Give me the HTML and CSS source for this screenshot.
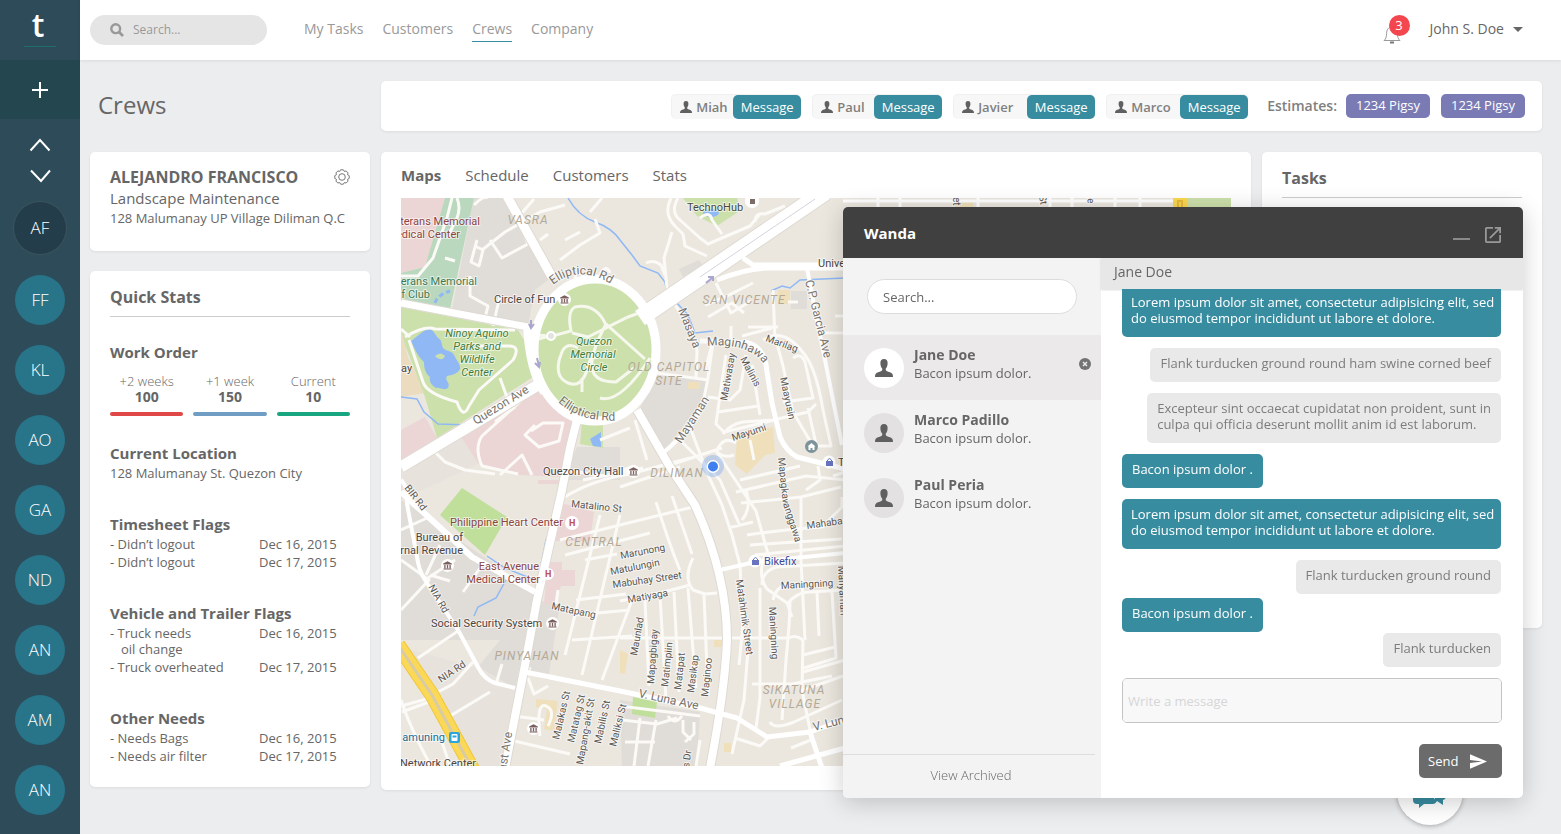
FILE: index.html
```html
<!DOCTYPE html>
<html lang="en">
<head>
<meta charset="utf-8">
<meta name="viewport" content="width=device-width, initial-scale=1">
<title>Crews</title>
<link rel="stylesheet" href="styles.css">
</head>
<body class="app">
<svg class="defs" width="0" height="0" aria-hidden="true">
  <symbol id="person" viewBox="0 0 16 16"><path d="M8 0C5.700 0 4.600 1.600 4.800 3.900c0 2 .8 3.600 1.600 4.600.2 1 0 1.700-.7 2.100C4 11.400 1.200 11.900.4 13.500.1 14.200 0 15.200 0 16h16c0-.8-.1-1.800-.4-2.500-.8-1.600-3.600-2.100-5.300-2.900-.7-.4-.9-1.100-.7-2.100.8-1 1.600-2.600 1.600-4.600C11.400 1.600 10.300 0 8 0z"/></symbol>
  <symbol id="bank" viewBox="0 0 12 12"><circle cx="6" cy="6" r="6" fill="#fff"/><path d="M6 2L2 4.200v.9h8v-.9zM3 5.500h1.200V8.500H3zM5.400 5.500h1.200V8.500H5.400zM7.800 5.500H9V8.500H7.800zM2.300 8.800h7.400v1H2.300z" fill="#7a5f5c"/></symbol>
</svg>

<aside class="sidebar">
  <a class="logo" href="#">t</a>
  <button class="sidebar-add" aria-label="Add"><svg width="16" height="16" viewBox="0 0 16 16"><path d="M8 0v16M0 8h16" stroke="#fff" stroke-width="2"/></svg></button>
  <div class="sidebar-arrows">
    <button class="arrow" aria-label="Previous"><svg width="22" height="14" viewBox="0 0 22 14"><path d="M1.500 12.500L11 2l9.500 10.500" fill="none" stroke="#fff" stroke-width="2"/></svg></button>
    <button class="arrow" aria-label="Next"><svg width="22" height="14" viewBox="0 0 22 14"><path d="M2 1.500L12 12l9-10.500" fill="none" stroke="#fff" stroke-width="2"/></svg></button>
  </div>
  <nav class="crew-list" aria-label="Crews">
    <a class="bubble bubble-active" href="#">AF</a>
    <a class="bubble" href="#">FF</a>
    <a class="bubble" href="#">KL</a>
    <a class="bubble" href="#">AO</a>
    <a class="bubble" href="#">GA</a>
    <a class="bubble" href="#">ND</a>
    <a class="bubble" href="#">AN</a>
    <a class="bubble" href="#">AM</a>
    <a class="bubble" href="#">AN</a>
  </nav>
</aside>

<div class="page">
  <header class="topbar">
    <label class="top-search">
      <svg width="14" height="14" viewBox="0 0 14 14"><circle cx="5.700" cy="5.700" r="4.400" fill="none" stroke="#999" stroke-width="2.400"/><path d="M9 9l4 4" stroke="#999" stroke-width="2.600"/></svg>
      <input type="search" placeholder="Search..." aria-label="Search">
    </label>
    <nav class="main-nav">
      <a href="#">My Tasks</a>
      <a href="#">Customers</a>
      <a class="current" href="#">Crews</a>
      <a href="#">Company</a>
    </nav>
    <div class="account">
      <button class="bell" aria-label="Notifications">
        <svg width="18" height="20" viewBox="0 0 18 20"><path d="M1 16.500c2-1.500 2.500-4 2.600-7C3.700 5.500 5.500 3 9 3s5.300 2.500 5.400 6.500c.1 3 .6 5.500 2.600 7z" fill="none" stroke="#999"/><path d="M7 18.500h4" stroke="#777" stroke-width="2"/></svg>
        <span class="badge">3</span>
      </button>
      <button class="user">John S. Doe <svg width="10" height="5" viewBox="0 0 10 5"><path d="M0 0h10L5 5z" fill="#666"/></svg></button>
    </div>
  </header>

  <main class="content">
    <h1 class="page-title">Crews</h1>
    <section class="crewbar" aria-label="Crew members">
      <div class="crew"><span class="crew-name"><svg class="crew-icon"><use href="#person"/></svg>Miah</span><button class="btn-message">Message</button></div>
      <div class="crew"><span class="crew-name"><svg class="crew-icon"><use href="#person"/></svg>Paul</span><button class="btn-message">Message</button></div>
      <div class="crew"><span class="crew-name crew-name-long"><svg class="crew-icon"><use href="#person"/></svg>Javier</span><button class="btn-message">Message</button></div>
      <div class="crew"><span class="crew-name crew-name-long"><svg class="crew-icon"><use href="#person"/></svg>Marco</span><button class="btn-message">Message</button></div>
      <div class="estimates"><span>Estimates:</span><a class="pill" href="#">1234 Pigsy</a><a class="pill" href="#">1234 Pigsy</a></div>
    </section>

    <div class="left-col">
      <section class="card profile">
        <div class="profile-head">
          <h2>ALEJANDRO FRANCISCO</h2>
          <button class="gear" aria-label="Settings"><svg width="16" height="16" viewBox="0 0 16 16" fill="none" stroke="#777"><path d="M15.200 6.600V9.400Q12.400 10 14.050 12.100L12.100 14.050Q10 12.400 9.400 15.200H6.600Q6 12.400 3.900 14.050L1.950 12.100Q3.600 10 .8 9.400V6.600Q3.600 6 1.950 3.900L3.900 1.950Q6 3.600 6.600 .8H9.400Q10 3.600 12.100 1.950L14.050 3.900Q12.400 6 15.200 6.600Z"/><circle cx="8" cy="8" r="3.300"/></svg></button>
        </div>
        <p class="role">Landscape Maintenance</p>
        <p class="address">128 Malumanay UP Village Diliman Q.C</p>
      </section>

      <section class="card stats">
        <h2 class="card-title">Quick Stats</h2>
        <h3 class="stat-title">Work Order</h3>
        <div class="orders">
          <div class="order order-red">+2 weeks<strong>100</strong></div>
          <div class="order order-blue">+1 week<strong>150</strong></div>
          <div class="order order-green">Current<strong>10</strong></div>
        </div>
        <div class="stat-block">
          <h3 class="stat-title">Current Location</h3>
          <p class="stat-text">128 Malumanay St. Quezon City</p>
        </div>
        <div class="stat-block">
          <h3 class="stat-title">Timesheet Flags</h3>
          <ul class="flags">
            <li><span>- Didn’t logout</span><time>Dec 16, 2015</time></li>
            <li><span>- Didn’t logout</span><time>Dec 17, 2015</time></li>
          </ul>
        </div>
        <div class="stat-block">
          <h3 class="stat-title">Vehicle and Trailer Flags</h3>
          <ul class="flags">
            <li><span class="flag-wrap">- Truck needs<br>oil change</span><time>Dec 16, 2015</time></li>
            <li><span>- Truck overheated</span><time>Dec 17, 2015</time></li>
          </ul>
        </div>
        <div class="stat-block">
          <h3 class="stat-title">Other Needs</h3>
          <ul class="flags">
            <li><span>- Needs Bags</span><time>Dec 16, 2015</time></li>
            <li><span>- Needs air filter</span><time>Dec 17, 2015</time></li>
          </ul>
        </div>
      </section>
    </div>

    <section class="card map-card">
      <nav class="tabs">
        <a class="tab-on" href="#">Maps</a>
        <a href="#">Schedule</a>
        <a href="#">Customers</a>
        <a href="#">Stats</a>
      </nav>
      <svg class="map" viewBox="401 198 830 568" preserveAspectRatio="xMinYMin slice" role="img" aria-label="Map of Quezon City">
        <rect x="401" y="198" width="830" height="568" fill="#ebe7df"/>
        <!-- built-up blocks -->
        <g fill="#e0dcd7">
          <path d="M474 198H505L552 277 535 290 528 325 452 309z"/>
          <path d="M401 500L430 520 535 592 515 688 478 667 500 640 400 640z"/>
          <path d="M401 647L478 668 515 690 508 766 470 766z" opacity=".35"/>
          <path d="M657 375L708 380 703 400 665 450 640 408z"/>
          <path d="M577 447H620V480H563z"/>
          <path d="M620 700L700 712 697 766H622z"/>
          <path d="M401 460L478 420 480 463 401 500z" opacity=".4"/>
          <path d="M535 600L560 604 548 680 525 672z"/>
          <path d="M679 269l20-9 4 6-20 11z"/><path d="M791 291h16v18h-16z"/>
        </g>
        <!-- hospitals -->
        <g fill="#ecd5d5">
          <path d="M401 198H445L425 267 401 273z"/>
          <path d="M401 430L425 417 437 438 401 460z"/>
          <path d="M462 438L538 388 565 407 572 420 562 477 520 475 478 463z"/>
          <path d="M561 503L594 512 590 541 556 541z"/><path d="M548 562h14v8h13v16h-14l-6 18h-11z"/>
          <path d="M538 480h27v4h-27z"/>
        </g>
        <!-- schools -->
        <g fill="#efe0bb">
          <path d="M737 437L773 427 775 453 765 455 747 474 735 465z"/>
          <path d="M401 330L408 357 425 393 401 397z" fill="#ecdcbf"/>
          <path d="M778 290h12v14h-12z"/><path d="M688 382h12v7h-12zM714 640h8v7h-8zM724 743h7v9h-7zM536 699l22 2-4 30-10-2 3-20-11-2z"/>
          <path d="M620 650l8 4-3 20-5-1z"/><path d="M955 200h18v7h-18z"/>
        </g>
        <!-- parks -->
        <g fill="#cce0ab">
          <path d="M401 307L518 330 530 350 533 377 437 438 425 397 405 345 401 330z"/>
          <ellipse cx="595" cy="350" rx="60" ry="70"/>
          <path d="M582 420L603 414V448L580 444z"/>
          <path d="M462 488L507 517 485 555 440 515z" fill="#bfdf9b"/>
          <path d="M633 697L657 702 655 718 632 714z" fill="#bfdf9b"/>
          <path d="M683 198H737L741 210 717 226 697 216z"/>
          <path d="M1187 198h44v10h-44z"/>
          <path d="M445 198H474L450 309 401 300 401 273 425 267z" fill="#b9d8bd"/>
        </g>
        <!-- water -->
        <g fill="#8fb8f5">
          <path d="M411 341C418 336 422 331 429 329c6 2 6 6 9 9 5 2 3 9 6 11 5 3 9 2 11 8 2 4 6 8 5 12-3 5-8 6-13 7-3 5 4 6 1 12-5 3-8-1-12 0-5-3-7-7-6-11-5-4-6-10-6-15-5-4-9-12-13-21z"/>
          <ellipse cx="711" cy="213" rx="8" ry="4"/><path d="M590 439l11-7v15l-8-1z"/>
        </g>
        <path d="M435 356q6-5 10 0-2 5-8 2z" fill="#cce0ab"/>
        <g fill="none" stroke="#8fb8f5" stroke-width="1.500">
          <path d="M568 198Q578 216 595 222T620 240L632 255 640 266 658 273 665 282 668 298"/>
          <path d="M676 302L688 315 695 333 713 331"/><path d="M771 291L782 286 790 288 800 280 845 278"/>
          <path d="M401 397L417 399 424 412 438 424 470 425"/><path d="M506 580L496 598 478 607 474 616M487 556L505 568 535 580M536 590L542 560 546 540 550 532"/>
          <path d="M435 303q2-8 15-12" stroke-dasharray="5 3" stroke-width="3"/>
        </g>
        <!-- minor streets -->
        <g class="streets">
          <path d="M457 198q4 10 0 20l-10 20M445 258l10 3M474 205q10-10 14-7M452 198l-5 20-14 40-15 18h-17M475 246l8 4-4 16-8-4 6-22M482 250L505 232 540 212 565 205M490 240l12 18 26-14-6-16M540 240l8-6M520 215l14-16M560 260l20-15 20-12-5-14M575 278q2-10 10 0M600 275q6-12 10-2M470 276v20l18 10-3 12M500 296l-7 30M590 212l12-14M565 240l15-8"/>
          <path d="M671 198q-8 16 4 28l8 8 2 12 22 10M678 198q-8 14 2 22l20 18 8 6 42-18 10-12M672 232l-8 26 4 40M646 263q8-4 15 2l4 10M700 218q10-8 12 2l10 14M755 222q0-10 10-8l20-8"/>
          <path d="M705 305l20-8 28-14M716 283l15 30 20-12M708 317l24-14 12 10M748 327h30M742 336l30-8M731 326v16M773 290l2 50M788 302h10M835 316h10M820 333h25"/>
          <path d="M675 305L692 330 697 350 696 377M700 342H713L708 378 704 398M713 341l-8 30M657 373L708 380M700 340l45 2M708 397L730 400 740 390 746 355M726 355L720 395 716 424 724 432 775 420"/>
          <path d="M718 412l40-6M752 365l8 50M723 434q8-10 20-12l30-2 35-8 8-8M775 336l8 30 10 46 20 34M793 358q8-6 12 4l8 36-30 4M808 408l8 36"/>
          <path d="M763 340q16-10 30 2t20 28 10 40l8 36h-18M736 443q-10-6-16 2l-4 6q8 8 18 4M750 440l4 20M722 448L670 465M716 451l40 60 14 50M690 427l18 48 14 30 10 30 8 30 3 60-4 40"/>
          <path d="M680 440l40 40 20 46M740 480l60-14M736 492l70-16 40 4M741 503l60-6 40-10M742 520q10-12 4-30M728 528l25-6M818 466l2 14-14 10M845 472l-12 4"/>
          <path d="M747 535q40-6 75-8l20-20 0-10M750 545l30-2 62-4M755 555L845 546M765 555q-8 20 2 34l20 14 5 14M762 585q0-14 15-18l68-4M760 588q0 30 0 110l-4 30M773 600q2-12 14-16M790 600q0 20-4 60l-4 60M787 604q10-12 22-12l36-2M817 592l2 44M832 592l4 66-32 10M803 655l32-8M803 640q-8-6-14-2H620M803 640l-1 50 8 40M803 672l42-12M803 690l40-14"/>
          <path d="M752 684h40l40-8M770 722q4 8 24 0l48-22"/>
          <path d="M748 650l-4 50-12 54M735 738l25 8 10-10M791 748l20-8M801 498v62l4 80"/>
          <path d="M620 487l60-20M560 500q30-20 70-26l60-16M560 540l80-20 57-14M565 555l85-22M656 502q16 50 24 68M672 496l20 58"/>
          <path d="M693 558q-10 20 0 32l12 4 12-1M690 585l-30 8-40 8M660 595l6 105M674 592l5 100M688 588l8 100M704 595l4 100M645 600l4 86"/>
          <path d="M600 515l-35 140M620 515l-38 160M585 560l32-6M576 600l50-6M572 640l60-4M575 615l55-5M632 600l-30 80"/>
          <path d="M583 480l60-12M565 470l40 6 30-10M600 440l30-12M635 420l12 40"/>
          <path d="M516 715l-2-4 16-44M514 716l30 4M540 736q-4-34 6-30t2 20M510 740l60 14M528 678l6 16 14-8M556 604l2-14"/>
          <path d="M620 706l80 10M622 720l35 4 20-6M625 742h30M640 718l-6 48M656 720l-8 46M668 716q6 10 14 0M683 720v12l8 8M694 722v12l-9 8M700 740l-4 26"/>
          <path d="M401 610l28-30-28-20M425 580l30-20M401 530l26-12M430 575l20 6M463 592l20-28M440 545l-14 30M401 706l22-6 30-16 20-22M450 716l40-24M458 631l-40 27M401 700q10 30 30 66M402 712l40-15M502 664l-6 20M450 766l-10-30"/>
          <path d="M435 452l10 10 20 8 30 4M522 400l-40 36q-8 12 0 30l36 8M535 425l-10 10 14 12 20-6 4-18-20 0-12 8M500 475l22-20 10 20M495 422l20-15"/>
          <path d="M405 337q20-12 30-8l80 1M409 340q10 30 14 42t34 20q6 18 12 4l10-16 34-30q8-14-4-14H480M500 378l8 22M410 337l-9-8"/>
        </g>
        <g class="paths">
          <path d="M535 335q10 0 14 2l22-6q-4-20 4-24 20-4 30 16l40 36M535 340l18-5M572 333l16 4 40-20 22-8M560 357q-6 20 8 26t20-16 8-8M606 324q-16 30-14 44t24 14l18-14M582 378v14M560 358q4-18 18-10M600 398q20 6 50-40"/>
        </g>
        <!-- avenues -->
        <g class="casing"><path d="M401 303L528 327" stroke-width="9"/><path d="M401 467L538 385" stroke-width="13"/><path d="M507 196L552 277" stroke-width="11"/><path d="M640 318L825 192" stroke-width="19"/><path d="M577 420L570 448 562 490 537 600 525 665 505 768" stroke-width="10"/><path d="M637 410L670 467 695 505Q727 575 727 640 725 690 710 768" stroke-width="10"/></g>
        <g class="roads">
          <path d="M401 303L528 327" stroke-width="7"/>
          <path d="M401 467L538 385" stroke-width="11"/>
          <path d="M507 196L552 277" stroke-width="9"/>
          <path d="M640 318L825 192" stroke-width="17"/>
          <ellipse cx="595" cy="350" rx="61" ry="71" stroke-width="9"/>
          <path d="M528 325Q530 370 545 392" stroke-width="10"/>
          <path d="M577 420L570 448 562 490 537 600 525 665 505 768" stroke-width="8"/>
          <path d="M637 410L670 467 695 505Q727 575 727 640 725 690 710 768" stroke-width="8"/>
          <path d="M401 492L435 523 472 557 535 592" stroke-width="6"/>
          <path d="M401 480q8 8 6 24l10 53q2 14 8 23l33 50 20 37q6 12 17 16l20 5" stroke-width="4"/>
          <path d="M525 672L625 692 700 708 737 718 767 737 810 732 850 718" stroke-width="5"/>
          <path d="M810 732l12 36M780 766l65-18" stroke-width="5"/>
          <path d="M743 258l10 7H845M717 280q30-12 53-12M770 268h75" stroke-width="5"/>
          <path d="M807 268L815 310 842 445" stroke-width="4"/>
          <path d="M745 342q20 4 22 30l5 31 8 34q6 14 17 20l48 12" stroke-width="5"/>
          <path d="M720 570L755 562 845 553M704 398q-6 26-40 54" stroke-width="4"/>
          <path d="M843 201h330M878 198v10M900 198v10M978 198v10M1050 198v10M1072 198v10M1115 198v10M1140 198v10" stroke-width="3"/>
        </g>
        <path d="M700 277L815 199" stroke="#d5d2dc" fill="none"/>
        <circle cx="551" cy="336" r="4" fill="#e3e3e0" stroke="#fff" stroke-width="2"/>
        <g fill="none"><path d="M398 645L432 695 474 772" stroke="#f0c53a" stroke-width="15"/><path d="M398 645L432 695 474 772" stroke="#fbd957" stroke-width="13"/><path d="M398 645L432 695 474 772" stroke="#d8cba6" stroke-width="3"/></g>
        <path d="M1173 198h14v9h-14z" fill="#f9d851"/><path d="M1178 207v-6h4v6" fill="none" stroke="#e8b93a" stroke-width="2"/>
        <g fill="none" stroke="#a9a6cf" stroke-width="2"><path d="M531 320v7M529 324l2 4 3-4M537 358l2 8M535 363l4 4 1-5M706 283l6-5M708 277h5v4"/></g>

        <!-- area names -->
        <g class="area">
          <text x="528" y="224">VASRA</text><text x="744" y="304">SAN VICENTE</text><text x="669" y="371">OLD CAPITOL</text><text x="669" y="385">SITE</text><text x="677" y="477">DILIMAN</text><text x="594" y="546">CENTRAL</text><text x="527" y="660">PINYAHAN</text><text x="794" y="694">SIKATUNA</text><text x="795" y="708">VILLAGE</text>
        </g>
        <g class="place red"><text x="480" y="225" text-anchor="end">terans Memorial</text><text x="460" y="238" text-anchor="end">edical Center</text><text x="450" y="526">Philippine Heart Center</text><text x="539" y="570" text-anchor="end">East Avenue</text><text x="540" y="583" text-anchor="end">Medical Center</text></g>
        <g class="place green"><text x="477" y="285" text-anchor="end">erans Memorial</text><text x="430" y="298" text-anchor="end">f Club</text></g>
        <g class="place park"><text x="477" y="337">Ninoy Aquino</text><text x="477" y="350">Parks and</text><text x="477" y="363">Wildlife</text><text x="477" y="376">Center</text><text x="594" y="345">Quezon</text><text x="593" y="358">Memorial</text><text x="594" y="371">Circle</text></g>
        <g class="place">
          <text x="494" y="303">Circle of Fun</text><text x="401" y="372">ay</text><text x="687" y="211">TechnoHub</text><text x="818" y="267">University Ave</text><text x="543" y="475">Quezon City Hall</text><text x="463" y="541" text-anchor="end">Bureau of</text><text x="463" y="554" text-anchor="end">rnal Revenue</text><text x="431" y="627">Social Security System</text><text x="400" y="767">Network Center</text><text x="838" y="466">T</text>
          <text x="764" y="565" class="blue">Bikefix</text><text x="445" y="741" class="train" text-anchor="end">amuning</text>
        </g>
        <!-- street names -->
        <g class="street">
          <path id="ell1" d="M553 285Q578 264 611 284" fill="none"/><text class="big"><textPath href="#ell1">Elliptical Rd</textPath></text>
          <path id="ell2" d="M558 402Q582 424 622 420" fill="none"/><text class="big"><textPath href="#ell2">Elliptical Rd</textPath></text>
          <text class="big" transform="translate(476 425) rotate(-32)">Quezon Ave</text>
          <text class="big" transform="translate(678 310) rotate(68)">Masaya</text>
          <path id="mag" d="M707 346Q748 342 764 364" fill="none"/><text class="big"><textPath href="#mag">Maginhawa</textPath></text>
          <text transform="translate(765 341) rotate(20)">Marilag</text>
          <text class="big" transform="translate(805 281) rotate(76)">C.P. Garcia Ave</text>
          <text transform="translate(727 401) rotate(-80)">Matiwasay</text>
          <text transform="translate(740 359) rotate(62)">Malinis</text>
          <text transform="translate(780 378) rotate(78)">Maayusin</text>
          <text class="big" transform="translate(681 444) rotate(-57)">Mayaman</text>
          <text transform="translate(733 441) rotate(-18)">Mayumi</text>
          <text transform="translate(778 458) rotate(84)">Mapagkaw</text>
          <text transform="translate(783 504) rotate(72)">anggawa</text>
          <text transform="translate(807 529) rotate(-8)">Mahaba</text>
          <text transform="translate(571 507) rotate(6)">Matalino St</text>
          <text transform="translate(621 559) rotate(-11)">Marunong</text>
          <text transform="translate(611 575) rotate(-11)">Matulungin</text>
          <text transform="translate(613 588) rotate(-8)">Mabuhay Street</text>
          <text transform="translate(628 603) rotate(-10)">Matiyaga</text>
          <text transform="translate(551 609) rotate(12)">Matapang</text>
          <text transform="translate(404 488) rotate(52)">BIR Rd</text>
          <text transform="translate(428 587) rotate(60)">NIA Rd</text>
          <text transform="translate(441 683) rotate(-34)">NIA Rd</text>
          <text transform="translate(736 580) rotate(82)">Matahimik Street</text>
          <text transform="translate(769 607) rotate(87)">Maningning</text>
          <text transform="translate(781 589) rotate(-3)">Maningning</text>
          <text transform="translate(637 656) rotate(-80)">Maunlad</text>
          <text transform="translate(654 684) rotate(-86)">Mapagbigay</text>
          <text transform="translate(668 687) rotate(-84)">Matimpiin</text>
          <text transform="translate(681 690) rotate(-84)">Matapat</text>
          <text transform="translate(694 693) rotate(-83)">Masikap</text>
          <text transform="translate(708 697) rotate(-84)">Maginoo</text>
          <text class="big" transform="translate(638 697) rotate(12)">V. Luna Ave</text>
          <text class="big" transform="translate(814 731) rotate(-14)">V. Luna Ave</text>
          <text transform="translate(559 740) rotate(-77)">Malakas St</text>
          <text transform="translate(574 743) rotate(-77)">Matatag St</text>
          <text transform="translate(583 765) rotate(-80)">Mapang-akit St</text>
          <text transform="translate(601 744) rotate(-78)">Mabilis St</text>
          <text transform="translate(616 747) rotate(-76)">Maliksi St</text>
          <text class="big" transform="translate(505 778) rotate(-81)">East Ave</text>
          <text transform="translate(689 768) rotate(-82)">s Dr</text>
          <text transform="translate(838 566) rotate(87)">Manyaman</text>
          <text transform="translate(953 197) rotate(90)">et</text><text transform="translate(1039 196) rotate(80)">St</text><text transform="translate(1087 196) rotate(84)">le</text>
        </g>
        <!-- markers -->
        <use href="#bank" x="558" y="293" width="13" height="13"/><use href="#bank" x="627" y="465" width="13" height="13"/><use href="#bank" x="441" y="559" width="13" height="13"/><use href="#bank" x="546" y="617" width="13" height="13"/><use href="#bank" x="527" y="722" width="13" height="13"/>
        <circle cx="572" cy="523" r="7" fill="#fff"/><circle cx="548" cy="574" r="6" fill="#fff"/>
        <text class="hospital" x="569" y="526">H</text><text class="hospital" x="545" y="577">H</text>
        <circle cx="752" cy="201" r="7" fill="#fff"/><path d="M750 199h5v5h-5z" fill="#7a6a68"/>
        <circle cx="811.500" cy="446.500" r="6.500" fill="#7d9299"/><path d="M811.500 443l-4 3.500h1v3.500h2v-2h2v2h2v-3.500h1z" fill="#fff"/>
        <g><circle cx="829" cy="462" r="6.500" fill="#fff"/><circle cx="755" cy="561" r="6.500" fill="#fff"/><g fill="#6874c0"><path d="M826 461h7v5h-7zM752 560h7v5h-7z"/></g><path d="M827.500 461v-1q2-3 4 0v1M753.500 560v-1q2-3 4 0v1" fill="none" stroke="#6874c0"/></g>
        <rect x="449" y="732" width="11" height="11" rx="2" fill="#2ba5de"/><rect x="451.500" y="734" width="6" height="7" rx="1" fill="#fff"/><path d="M452.500 735.500h4v2h-4z" fill="#2ba5de"/>
        <circle cx="713" cy="466" r="11" fill="#6e9df0" opacity=".35"/><circle cx="713" cy="466.500" r="6.500" fill="#fff"/><circle cx="713" cy="466.500" r="5" fill="#3f7fee"/>
      </svg>
    </section>

    <section class="card tasks">
      <h2 class="card-title">Tasks</h2>
    </section>
  </main>
</div>

<button class="chat-fab" aria-label="Open chat"><svg width="34" height="32" viewBox="0 0 34 32" fill="#388ca0"><path d="M13 2h16q4 0 4 4v14q0 3-3 4v5l-6-4h-2V14q0-4-4-4H9V6q0-4 4-4z"/><path d="M4 12h13q4 0 4 4v5q0 3 3 3 0 3-4 4h-9l-5 4v-4H4q-4 0-4-4v-8q0-4 4-4z"/></svg></button>

<section class="chat" aria-label="Wanda">
  <header class="chat-head">
    <h2>Wanda</h2>
    <button class="chat-min" aria-label="Minimize"></button>
    <button class="chat-open" aria-label="Open in new window"><svg width="16" height="16" viewBox="3 3 18 18" fill="#999"><path d="M19 19H5V5h7V3H5a2 2 0 00-2 2v14a2 2 0 002 2h14c1.100 0 2-.9 2-2v-7h-2v7zM14 3v2h3.590l-9.830 9.830 1.410 1.410L19 6.410V10h2V3h-7z"/></svg></button>
  </header>
  <div class="chat-body">
    <div class="contacts">
      <input class="contact-search" type="search" placeholder="Search..." aria-label="Search contacts">
      <ul class="contact-list">
        <li class="contact contact-on"><span class="avatar"><svg><use href="#person"/></svg></span><div class="contact-text"><strong>Jane Doe</strong>Bacon ipsum dolor.</div><button class="contact-close" aria-label="Close"><svg width="12" height="12" viewBox="0 0 12 12"><circle cx="6" cy="6" r="6" fill="#737373"/><path d="M4 4l4 4M8 4l-4 4" stroke="#ebe9ea" stroke-width="1.500"/></svg></button></li>
        <li class="contact"><span class="avatar"><svg><use href="#person"/></svg></span><div class="contact-text"><strong>Marco Padillo</strong>Bacon ipsum dolor.</div></li>
        <li class="contact"><span class="avatar"><svg><use href="#person"/></svg></span><div class="contact-text"><strong>Paul Peria</strong>Bacon ipsum dolor.</div></li>
      </ul>
      <a class="archived" href="#">View Archived</a>
    </div>
    <div class="thread">
      <h3 class="thread-name">Jane Doe</h3>
      <div class="messages">
        <p class="msg sent msg-full">Lorem ipsum dolor sit amet, consectetur adipisicing elit, sed<br>do eiusmod tempor incididunt ut labore et dolore.</p>
        <p class="msg">Flank turducken ground round ham swine corned beef</p>
        <p class="msg">Excepteur sint occaecat cupidatat non proident, sunt in<br>culpa qui officia deserunt mollit anim id est laborum.</p>
        <p class="msg sent">Bacon ipsum dolor .</p>
        <p class="msg sent msg-full">Lorem ipsum dolor sit amet, consectetur adipisicing elit, sed<br>do eiusmod tempor incididunt ut labore et dolore.</p>
        <p class="msg">Flank turducken ground round</p>
        <p class="msg sent msg-close">Bacon ipsum dolor .</p>
        <p class="msg msg-close">Flank turducken</p>
      </div>
      <form class="compose">
        <textarea rows="1" placeholder="Write a message" aria-label="Write a message"></textarea>
        <button class="send" type="button">Send <svg width="17" height="15" viewBox="2 3 21 18" fill="#fff"><path d="M2 21l21-9L2 3v7l15 2-15 2z"/></svg></button>
      </form>
    </div>
  </div>
</section>
</body>
</html>
```

FILE: styles.css
```css
* { box-sizing: border-box; }

h1, h2, h3, p, ul { margin: 0; padding: 0; }
ul { list-style: none; }
a { color: inherit; text-decoration: none; }
button, input, textarea { font: inherit; color: inherit; border: 0; padding: 0; background: none; }
button { cursor: pointer; }
svg { flex: none; }

.app {
  margin: 0;
  display: flex;
  min-height: 100vh;
  background: #ebedef;
  color: #666;
  font: 13px/18px "Open Sans", "Noto Sans", sans-serif;
}
.defs { position: absolute; }

/* Sidebar */
.sidebar { flex: none; width: 80px; background: #2e4b59; color: #fff; }
.logo {
  display: block;
  width: 32px;
  height: 47px;
  margin: 0 auto 13px;
  padding-right: 4px;
  border-bottom: 1px solid #1f6d6d;
  font-size: 32px;
  font-weight: 600;
  line-height: 50px;
  text-align: center;
}
.sidebar-add { display: flex; align-items: center; justify-content: center; width: 100%; height: 59px; background: #24464f; }
.sidebar-arrows { display: flex; flex-direction: column; align-items: center; gap: 17px; padding: 19px 0 18px; }
.arrow { height: 14px; display: flex; }
.crew-list { display: flex; flex-direction: column; align-items: center; gap: 20px; }
.bubble {
  width: 50px;
  height: 50px;
  border-radius: 50%;
  background: #28758a;
  font-size: 17px;
  font-weight: 300;
  line-height: 50px;
  text-align: center;
}
.bubble-active { width: 54px; height: 54px; border: 1px solid #3d5460; background: #233d4b; line-height: 52px; }

/* Top bar */
.page { flex: 1; min-width: 0; }
.topbar {
  display: flex;
  align-items: center;
  height: 60px;
  padding: 0 38px 0 10px;
  background: #fff;
  box-shadow: 0 1px 3px rgba(0, 0, 0, .08);
}
.top-search { display: flex; align-items: center; gap: 9px; width: 177px; height: 30px; padding: 0 20px; border-radius: 15px; background: #e5e5e5; }
.top-search input { width: 100%; min-width: 0; font-size: 12px; outline: 0; }
.top-search input::placeholder { color: #999; }
.main-nav { display: flex; gap: 19px; margin-left: 37px; font-size: 14px; line-height: 22px; color: #999; }
.main-nav a { height: 24px; border-bottom: 1px solid transparent; }
.main-nav .current { border-color: #388ca0; }
.account { display: flex; align-items: center; gap: 29px; margin-left: auto; padding-bottom: 2px; }
.bell { position: relative; height: 20px; margin-top: 10px; }
.badge {
  position: absolute;
  top: -9px;
  left: 6px;
  width: 21px;
  height: 21px;
  border-radius: 50%;
  background: rgba(242, 60, 68, .95);
  color: #fff;
  line-height: 20px;
}
.user { display: flex; align-items: center; gap: 9px; font-size: 14px; }

/* Page grid */
.content {
  display: grid;
  grid-template-columns: 280px minmax(0, 1fr) 280px;
  align-items: start;
  gap: 21px 11px;
  padding: 21px 19px 44px 10px;
}
.page-title { padding-left: 8px; font-size: 24px; font-weight: 500; line-height: 48px; }
.crewbar, .card { border-radius: 5px; background: #fff; box-shadow: 0 1px 3px rgba(0, 0, 0, .07); }
.crewbar {
  grid-column: 2 / 4;
  display: flex;
  align-items: center;
  justify-content: flex-end;
  gap: 11px;
  height: 50px;
  padding: 0 17px;
}
.crew { display: flex; border: 1px solid #f0f0f0; border-width: 1px 0 0 1px; border-radius: 5px; background: #f7f7f7; }
.crew-name { display: flex; align-items: center; gap: 4px; width: 61px; padding-left: 8px; font-weight: 600; color: #808080; }
.crew-name-long { width: 73px; }
.crew-icon { width: 12px; height: 12px; fill: #606060; }
.btn-message { width: 68px; height: 24px; border-radius: 5px; background: #388ca0; color: #fff; font-weight: 500; line-height: 22px; }
.estimates { display: flex; align-items: center; gap: 11px; margin-left: 8px; font-size: 14px; font-weight: 600; color: #808080; }
.pill { width: 84px; height: 24px; border-radius: 5px; background: #7a7bb5; color: #fff; font-size: 13px; font-weight: 400; line-height: 23px; text-align: center; }
.estimates span { margin-right: -2px; }

/* Left column */
.left-col { display: grid; gap: 20px; }
.card { padding: 15px 20px; }
.profile { min-height: 99px; padding-top: 14px; }
.profile-head { display: flex; align-items: center; justify-content: space-between; }
.profile h2 { font-size: 16px; font-weight: 700; line-height: 22px; }
.gear { height: 16px; }
.role { font-size: 15px; line-height: 20px; }
.address { line-height: 20px; }
.card-title { padding-bottom: 8px; border-bottom: 1px solid #ccc; font-size: 16px; font-weight: 700; line-height: 22px; }
.stats { padding-bottom: 22px; }
.stat-title { font-size: 15px; font-weight: 700; line-height: 21px; }
.card-title + .stat-title { margin: 25px 0 10px; }
.orders { display: grid; grid-template-columns: repeat(3, 1fr); gap: 10px; margin-bottom: 27px; text-align: center; line-height: 16px; }
.order { font-weight: 300; }
.order strong { display: block; font-size: 14px; font-weight: 700; }
.order::after { content: ""; display: block; height: 4px; margin-top: 7px; border-radius: 2px; background: #e04848; }
.order-blue::after { background: #6f9dc4; }
.order-green::after { background: #17a680; }
.stat-block + .stat-block { margin-top: 32px; }
.flags li { display: flex; justify-content: space-between; padding: 1px 0; line-height: 16px; }
.flags time { flex: none; width: 91px; }
.flag-wrap { padding-left: 11px; text-indent: -11px; }

/* Map */
.map-card { padding: 12px 20px 24px; }
.tabs { display: flex; gap: 24px; margin-bottom: 12px; font-size: 15px; line-height: 22px; }
.tab-on { font-weight: 700; }
.map { display: block; width: 100%; height: 568px; font-family: Roboto, sans-serif; }
.streets { fill: none; stroke: #fbfaf7; stroke-width: 3; stroke-linejoin: round; }
.paths { fill: none; stroke: #f6f8ee; stroke-width: 3; }
.casing { fill: none; stroke: #dedad3; }
.roads { fill: none; stroke: #fff; stroke-linejoin: round; }
.area { fill: #b3a997; font-size: 12px; font-style: italic; text-anchor: middle; letter-spacing: 1px; }
.place { fill: #4c4642; font-size: 11px; paint-order: stroke; stroke: rgba(255, 255, 255, .6); stroke-width: 2px; }
.red { fill: #8c4544; }
.green { fill: #3d7a53; }
.park { fill: #3d7d3c; font-style: italic; text-anchor: middle; }
.place .blue { fill: #3c4a9e; }
.place .train { fill: #1a6b95; }
.street { fill: #5c5854; font-size: 10px; paint-order: stroke; stroke: rgba(255, 255, 255, .6); stroke-width: 2px; }
.street path { stroke: none; }
.street .big { font-size: 12px; fill: #77736d; }
.hospital { font-size: 9px; font-weight: 700; fill: #c0504d; }

.tasks { min-height: 476px; }

/* Chat window */
.chat-fab {
  position: fixed;
  right: 98px;
  bottom: 9px;
  width: 66px;
  height: 66px;
  display: flex;
  align-items: center;
  justify-content: center;
  border-radius: 50%;
  background: #fff;
  box-shadow: 0 1px 5px rgba(0, 0, 0, .3);
}
.chat {
  position: fixed;
  right: 38px;
  bottom: 36px;
  width: 680px;
  border-radius: 5px;
  overflow: hidden;
  background: #fff;
  box-shadow: 0 4px 24px rgba(0, 0, 0, .2);
}
.chat-head { display: flex; align-items: center; height: 51px; padding: 0 22px 0 21px; background: #404040; color: #fff; }
.chat-head h2 { flex: 1; font-size: 15px; font-weight: 700; }
.chat-min { width: 17px; height: 2px; margin: 13px 15px 0 0; background: #8a8a8a; }
.chat-open { height: 16px; margin-top: 4px; }
.chat-body { display: flex; }
.contacts { display: flex; flex-direction: column; width: 258px; background: #f3f3f3; }
.contact-search { height: 35px; margin: 21px 24px; padding: 0 15px; border: 1px solid #dcdcdc; border-radius: 18px; background: #fff; outline: 0; }
.contact-search::placeholder { color: #666; }
.contact { display: flex; align-items: center; gap: 10px; height: 65px; padding: 0 10px 0 21px; }
.contact-on { background: #ebe9ea; }
.avatar { display: flex; align-items: center; justify-content: center; width: 40px; height: 40px; border-radius: 50%; background: #e3e1e2; }
.contact-on .avatar { background: #fff; }
.avatar svg { width: 18px; height: 18px; fill: #606060; }
.contact-text { flex: 1; padding-bottom: 8px; }
.contact-text strong { display: block; font-size: 14px; font-weight: 700; line-height: 19px; }
.contact-close { height: 20px; display: flex; }
.archived { margin: auto 6px 0 0; padding: 11px 0 14px 4px; border-top: 1px solid #ddd; text-align: center; font-weight: 300; }
.thread { flex: 1; min-width: 0; }
.thread-name { height: 31px; padding-left: 13px; background: #e7e7e7; box-shadow: 0 1px 2px rgba(0, 0, 0, .15); font-size: 14px; font-weight: 400; line-height: 28px; }
.messages { display: flex; flex-direction: column; align-items: flex-end; padding: 0 22px 0 21px; line-height: 16px; color: #7c7c7c; }
.msg { margin-bottom: 11px; padding: 7px 10px 11px; border-radius: 5px; background: #e9e9e9; }
.sent { align-self: flex-start; background: #388ca0; color: #fff; }
.msg-full { align-self: stretch; padding: 7px 0 11px 9px; white-space: nowrap; }
.msg-full:first-child { padding-top: 5px; border-radius: 0 0 5px 5px; }
.msg-close { margin-top: -7px; }
.msg-close + .msg-close { margin-top: -10px; }
.compose { display: flex; flex-direction: column; align-items: flex-end; gap: 21px; padding: 0 21px 20px; }
.compose textarea { width: 100%; height: 45px; padding: 13px 5px; border: 1px solid #c4c4c4; border-radius: 5px; background: #f8f8f8; resize: none; outline: 0; }
.compose textarea::placeholder { color: #d6d6d6; }
.send { display: flex; align-items: center; gap: 12px; width: 83px; height: 34px; padding-left: 9px; border-radius: 5px; background: #6b6b6b; color: #fff; }
```
